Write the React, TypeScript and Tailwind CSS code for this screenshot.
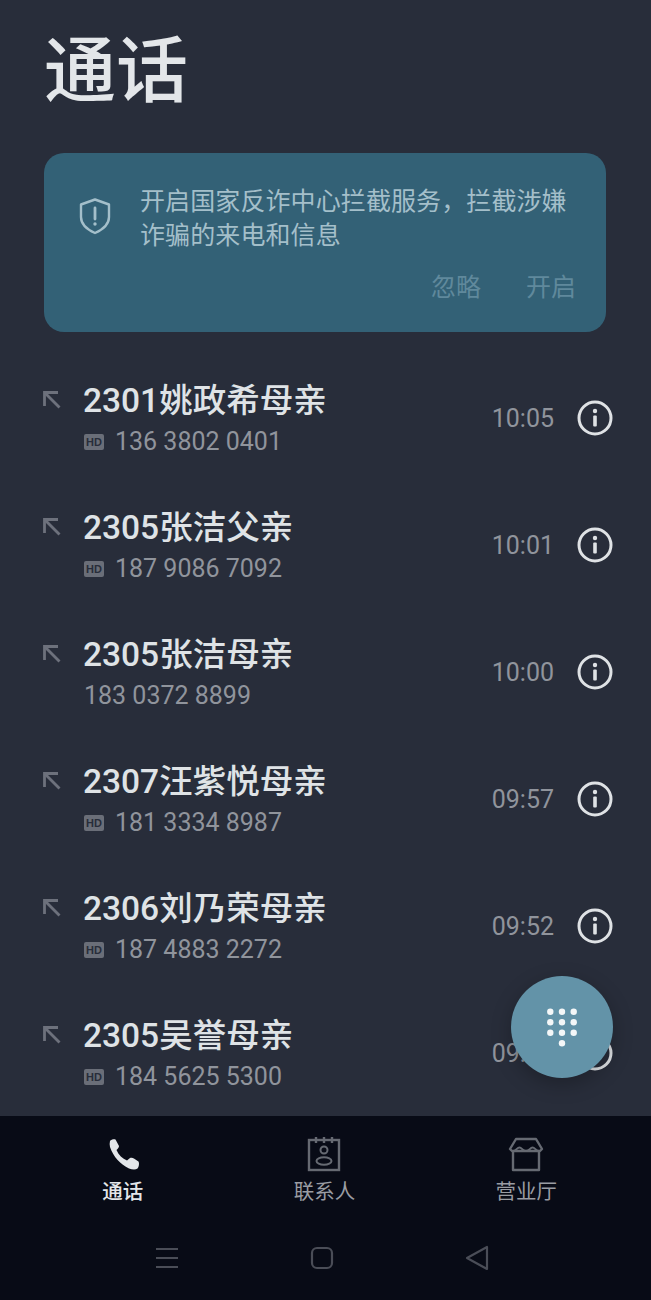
import React from 'react';

const cjk = "font-['Roboto','Noto_Sans_CJK_SC',sans-serif]";

interface Call {
  name: string;
  phone: string;
  time: string;
  hd: boolean;
}

const calls: Call[] = [
  { name: '2301姚政希母亲', phone: '136 3802 0401', time: '10:05', hd: true },
  { name: '2305张洁父亲', phone: '187 9086 7092', time: '10:01', hd: true },
  { name: '2305张洁母亲', phone: '183 0372 8899', time: '10:00', hd: false },
  { name: '2307汪紫悦母亲', phone: '181 3334 8987', time: '09:57', hd: true },
  { name: '2306刘乃荣母亲', phone: '187 4883 2272', time: '09:52', hd: true },
  { name: '2305吴誉母亲', phone: '184 5625 5300', time: '09:50', hd: true },
];

const InfoIcon = () => (
  <svg width="36" height="36" viewBox="0 0 36 36" fill="none" className="text-[#dfe2e5]">
    <circle cx="18" cy="18" r="16" stroke="currentColor" strokeWidth="3" />
    <circle cx="18" cy="11" r="2.2" fill="currentColor" />
    <rect x="16.2" y="15.5" width="3.6" height="11" rx="1" fill="currentColor" />
  </svg>
);

const MissedArrow = () => (
  <svg width="22" height="22" viewBox="0 0 22 22" fill="none" stroke="#6d717c" strokeWidth="2.8">
    <path d="M17 3.500H3.500V17" />
    <path d="M3.500 3.500L18.500 18.500" />
  </svg>
);

const ShieldIcon = () => (
  <svg width="34" height="38" viewBox="0 0 34 38" fill="none" stroke="#a4bfca" strokeWidth="2.4" strokeLinejoin="round">
    <path d="M17 2.500 31 7.500V20c0 7.500-6 12.500-14 16C9 32.500 3 27.500 3 20V7.500z" />
    <path d="M17 11v11" strokeLinecap="round" strokeWidth="2.800" />
    <circle cx="17" cy="27" r="1.700" fill="#a4bfca" stroke="none" />
  </svg>
);

const PhoneTabIcon = () => (
  <svg width="36" height="36" viewBox="0 0 36 36" fill="#e3e6e9">
    <path d="M5 5C6 3.500 9 3 10.500 3.500L14 10C14 11.500 13 12.500 11.500 14C13.500 19 17.500 22.500 22 24.500L25 22C27 21 29 22 33.500 25.500C34.500 27 34 31 32.500 32.500C30.500 34 27 33.500 24 32.500C15.500 28.500 8.500 21 5 11C4.500 9 4.500 7 5 5Z" />
  </svg>
);

const ContactsIcon = () => (
  <svg width="36" height="36" viewBox="0 0 36 36" fill="none" stroke="#666a72" strokeWidth="2.4">
    <rect x="3" y="4" width="30" height="30" />
    <path d="M10 1v6M18 1v6M26 1v6" />
    <circle cx="18" cy="14" r="3.500" strokeWidth="2" />
    <ellipse cx="18" cy="25" rx="7.500" ry="3.800" strokeWidth="2" />
  </svg>
);

const StoreIcon = () => (
  <svg width="36" height="36" viewBox="0 0 36 36" fill="none" stroke="#666a72" strokeWidth="2.4" strokeLinejoin="round">
    <path d="M8 3H28L34 13L32 15H4L2 13Z" />
    <path d="M5 15c3 0 4-3.500 6.500-3.500S14 15 18 15s4-3.500 6.500-3.500S28 15 31 15" strokeWidth="2" />
    <path d="M5 15v19h26V15" />
  </svg>
);

const CallRow = ({ call }: { call: Call }) => (
  <div className="flex h-[127px] shrink-0 items-center pl-[41px] pr-[38px]">
    <div className="w-[42px] shrink-0 self-start pt-[33px]">
      <MissedArrow />
    </div>
    <div className="min-w-0 flex-1">
      <div className="text-[33.500px] leading-[44px] font-medium text-[#dfe3e6]">{call.name}</div>
      <div className="mt-[1px] flex h-[36px] items-center pl-[1px]">
        {call.hd && (
          <span className="mr-[11px] flex h-[16px] w-[20px] items-center justify-center rounded-[2px] bg-[#6a6e78] font-['Liberation_Sans',sans-serif] text-[11px] font-bold text-[#282d3a]">
            HD
          </span>
        )}
        <span className="text-[25px] text-[#90949c]">{call.phone}</span>
      </div>
    </div>
    <span className="mt-[-2px] mr-[23px] text-[25px] text-[#90949c]">{call.time}</span>
    <div className="mt-[-4px]">
      <InfoIcon />
    </div>
  </div>
);

const TabItem = ({ icon, label, active }: { icon: React.ReactNode; label: string; active?: boolean }) => (
  <div className="flex flex-col items-center">
    {icon}
    <span className={`mt-[6px] text-[20.500px] leading-[28px] ${active ? 'font-medium text-[#e3e6e9]' : 'text-[#9a9da3]'}`}>
      {label}
    </span>
  </div>
);

const DialButton = () => (
  <button className="absolute left-[511px] top-[976px] flex h-[102px] w-[102px] items-center justify-center rounded-full bg-[#6393a8] shadow-[0_6px_20px_rgba(0,0,0,0.25)]">
    <svg width="34" height="40" viewBox="0 0 34 40" fill="#f4f7f8">
      {[4.700, 15.300, 25.700].map((cy) =>
        [5.300, 17, 28.700].map((cx) => <circle key={`${cx}-${cy}`} cx={cx} cy={cy} r="3.200" />)
      )}
      <circle cx="17" cy="36.300" r="3.200" />
    </svg>
  </button>
);

export default function App() {
  return (
    <div className={`relative flex h-[1300px] w-[651px] flex-col overflow-hidden bg-[#282d3a] ${cjk}`}>
      <h1 className="px-[44px] pt-[36px] text-[72px] leading-[72px] font-medium text-[#e3e6e9]">通话</h1>

      <div className="mx-[44px] mt-[45px] h-[179px] w-[562px] shrink-0 rounded-[20px] bg-[#336176] pl-[34px] pr-[30px]">
        <div className="flex pt-[32px]">
          <div className="w-[62px] shrink-0 pt-[12px]">
            <ShieldIcon />
          </div>
          <p className="text-[25px] leading-[34px] tracking-[0.1px] text-[#a4bfca]">开启国家反诈中心拦截服务，拦截涉嫌诈骗的来电和信息</p>
        </div>
        <div className="mt-[18px] flex justify-end gap-[45px] text-[25px] leading-[34px] text-[#60899c]">
          <span>忽略</span>
          <span>开启</span>
        </div>
      </div>

      <div className="mt-[24px] flex min-h-0 flex-1 flex-col overflow-hidden">
        {calls.map((call) => (
          <CallRow key={call.name + call.time} call={call} />
        ))}
      </div>

      <div className="flex h-[184px] shrink-0 flex-col bg-[#080b16]">
        <div className="grid grid-cols-3 pl-[22px] pr-[24px] pt-[20px]">
          <TabItem icon={<PhoneTabIcon />} label="通话" active />
          <TabItem icon={<ContactsIcon />} label="联系人" />
          <TabItem icon={<StoreIcon />} label="营业厅" />
        </div>
        <div className="mt-[39px] grid grid-cols-3 items-center justify-items-center pl-[90px] pr-[97px]">
          <svg width="24" height="24" viewBox="0 0 24 24" stroke="#4a4d57" strokeWidth="2">
            <path d="M1 3h22M1 12h22M1 21h22" />
          </svg>
          <svg width="24" height="24" viewBox="0 0 24 24" fill="none" stroke="#4a4d57" strokeWidth="2.200">
            <rect x="2" y="2" width="20" height="20" rx="5" />
          </svg>
          <svg width="24" height="26" viewBox="0 0 24 26" fill="none" stroke="#4a4d57" strokeWidth="2.200" strokeLinejoin="round">
            <path d="M22 2v22L2 13z" />
          </svg>
        </div>
      </div>

      <DialButton />
    </div>
  );
}
